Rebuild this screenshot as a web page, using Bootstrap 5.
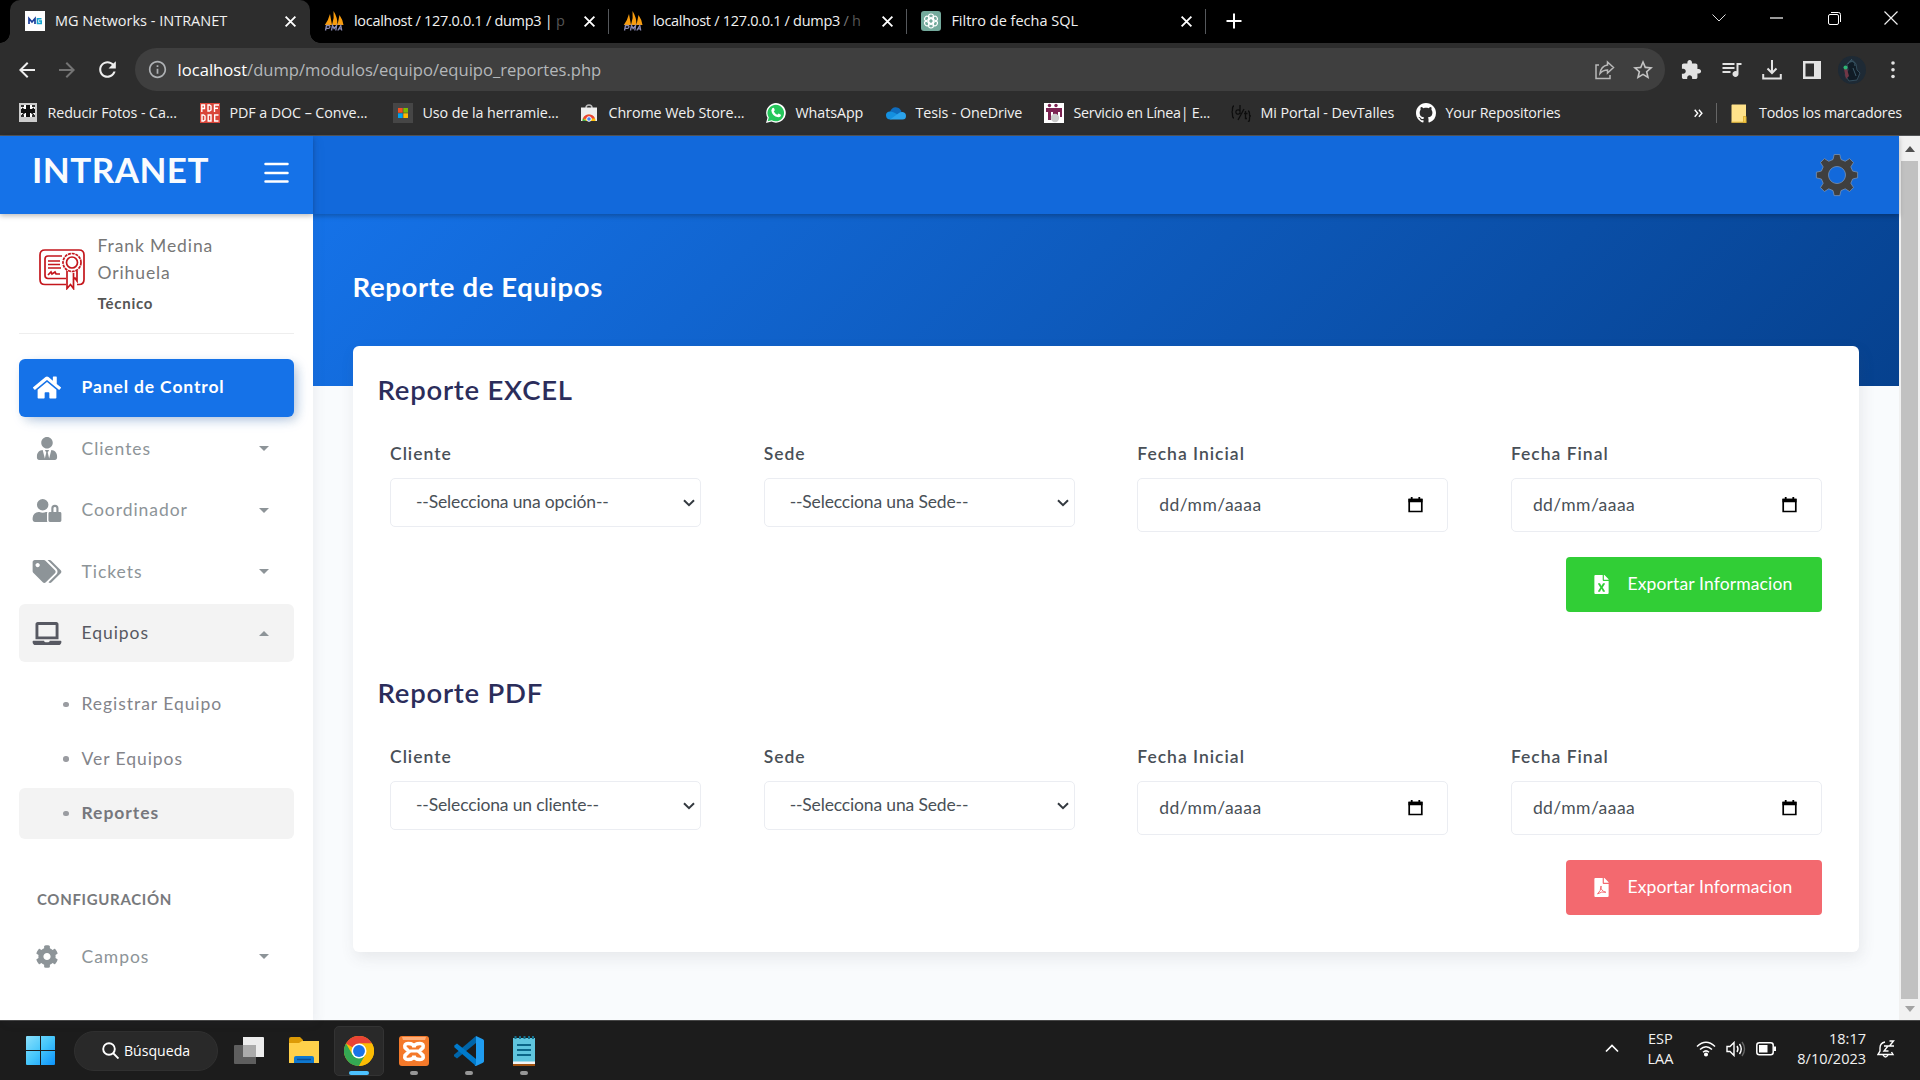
<!DOCTYPE html>
<html lang="es">
<head>
<meta charset="utf-8">
<title>MG Networks - INTRANET</title>
<link href="https://cdn.jsdelivr.net/npm/bootstrap@5.3.0/dist/css/bootstrap.min.css" rel="stylesheet">
<script src="https://cdn.jsdelivr.net/npm/bootstrap@5.3.0/dist/js/bootstrap.bundle.min.js"></script>
<style>
body{width:1920px;height:1080px;overflow:hidden;font-family:Lato,"Open Sans",sans-serif;font-size:17.5px;background:#f9fbfd}
svg{display:block;flex:none}
.sys{font-family:"Open Sans","Noto Sans",sans-serif;font-size:14.5px;color:#f1f1f1;white-space:nowrap}
.tabstrip{height:43px;background:#000;padding-left:10px}
.btab{width:298.7px;height:34px;padding:0 13px 0 14px;gap:10px;position:relative}
.btab .ttl{width:216px}
.btab.cut .ttl{letter-spacing:-.3px}
.btab .fade-1{color:#555}
.btab .fade-2{color:#777}
.btab.sep::after{content:"";position:absolute;right:0;top:9px;width:1px;height:25px;background:#55585c}
.btab.on{background:#2d2d2d;height:43px;padding-left:15px;padding-bottom:1px;border-radius:10px 10px 0 0;width:300px}
.btab.on::before,.btab.on::after{content:"";position:absolute;bottom:0;width:10px;height:10px}
.btab.on::before{left:-10px;background:radial-gradient(circle at 0 0,transparent 9.5px,#2d2d2d 10px)}
.btab.on::after{right:-10px;background:radial-gradient(circle at 100% 0,transparent 9.5px,#2d2d2d 10px)}
.newtab{margin:13px 0 0 20px}
.wbtn{width:57.3px;height:36px}
.toolrow{height:48px;background:#2d2d2d;padding:5px 0 0 7px}
.tbtn{width:40.2px;height:43px}
.omni{width:1530px;height:43px;border-radius:22px;background:#3f3f3f;margin-left:7px;margin-right:7px;padding-left:13px}
.omni .url{font-size:16.6px;color:#b4b7ba;margin-left:11px;padding-top:1px}
.marks{height:45px;background:#2d2d2d;border-bottom:1px solid #545658;padding-left:17.5px;font-size:14.3px;letter-spacing:-.08px}
.bm{gap:10px;flex:none}
.viewport{height:884px}
.side{width:313px;background:#fff;box-shadow:4px 4px 10px rgba(69,65,78,.06);z-index:2}
.brandbar{height:78px;background:#1572e8;padding:0 24px 0 32px}
.brandbar b{font-size:35px;line-height:42px;letter-spacing:.45px;color:#f9fbfd;margin-top:12px}
.brandbar svg{margin-top:26px}
.headshade{box-shadow:0 2px 5px rgba(0,0,0,.26)}
.topbar{height:78px;background:#1269db;position:relative;z-index:1;padding-right:40.5px}
.person{height:120px;margin:0 19px;border-bottom:1px solid #eee;padding:18px 0 0 20px;color:#777;letter-spacing:.9px;line-height:27px}
.person svg{margin:17px 12.500px 0 0}
.person small{font-size:15px;font-weight:700;color:#555;letter-spacing:.75px;line-height:35px;display:block}
.menu{padding:24.5px 19px 0;letter-spacing:.95px;color:#8d9498}
.mi{height:58px;border-radius:6px;padding:0 25px 0 11px;margin-bottom:3.4px;gap:17.5px}
.mi svg.ic{width:34px;height:23px}
.mi.main{background:#1572e8;color:#fff;font-weight:700;letter-spacing:.87px;box-shadow:4px 4px 10px 0 rgba(0,0,0,.1),4px 4px 15px -5px rgba(21,114,232,.4)}
.mi.main svg.ic{height:25px}
.mi.open{background:#f3f3f3;color:#575962}
.caret{width:0;height:0;border:5px solid transparent;border-top-color:#8d9498;border-bottom-width:0;margin-left:auto}
.caret.up{border-bottom:5px solid #8d9498;border-top:0}
.subs{padding-top:13.3px}
.sub{height:51px;border-radius:6px;padding-left:44px;gap:13px;color:#83848a;margin-bottom:3.6px}
.sub i{width:5.5px;height:5.5px;border-radius:50%;background:#9a9ca1}
.sub.on{background:#f3f3f3;font-weight:700;color:#76777d}
.conf{font-size:15px;font-weight:700;letter-spacing:.68px;color:#77797c;padding-left:18px;margin:46.5px 0 14.5px;line-height:28px}
.hero{height:172px;background:linear-gradient(-45deg,#06418e,#1572e8);padding:56px 0 0 39.5px}
.hero h2{font-size:27.5px;font-weight:700;letter-spacing:.66px;color:#fff;line-height:34px}
.panel{width:1506px;height:606px;margin:-40px 0 0 40px;background:#fff;border-radius:6px;box-shadow:2px 6px 15px rgba(69,65,78,.1);position:relative}
.rep{height:303px;padding:27px 37px 0 37px}
.rep h3{font-size:27.5px;font-weight:600;letter-spacing:.75px;color:#2b2d5b;line-height:34px;margin:0 0 34px -12.5px}
.flds{gap:62.5px}
.flds>div{flex:1 1 0}
.flds label{font-weight:600;letter-spacing:1px;color:#495057;line-height:26px;display:block;margin-bottom:11px}
.fin{font-size:17.5px;border:1px solid #ebedf2;border-radius:5px;color:#495057;background-color:#fff}
select.fin{height:49px;padding:0 40px 1px 25px;letter-spacing:-.15px;background-image:url("data:image/svg+xml,%3Csvg xmlns='http://www.w3.org/2000/svg' viewBox='0 0 12 8'%3E%3Cpath d='M1 1.2l5 5 5-5' fill='none' stroke='%23343a40' stroke-width='2'/%3E%3C/svg%3E");background-size:12px 8px;background-position:right 5px center}
div.fin{height:54px;padding:0 24px 0 21px;letter-spacing:.45px}
.exp{width:256px;height:55px;border-radius:4px;color:#fff;font-size:17.5px;letter-spacing:.13px;padding:0 0 0 27px;gap:18.5px;margin-top:25px}
.xls,.xls:hover{background:#31ce36}
.pdf,.pdf:hover{background:#f3696f}
.scroll{width:21px;background:#f1f1f1;padding:10px 2px 0 2px}
.scroll i{display:block;width:17px;height:838px;background:#c1c1c1;margin:9px 0 7px}
.task{height:60px;background:#1c1c1c;border-top:1px solid #474747;padding:0 25px 0 26px}
.pill{width:144px;height:40px;border-radius:20px;background:#292929;border:1px solid #303030;margin:0 6px 0 19px;font-size:14.1px;color:#fff;gap:5px;padding-left:27px}
.app{width:50px;height:50px;margin-right:5px;position:relative;border-radius:5px;border:1px solid transparent}
.app.on{background:#292929;border-color:#333}
.app.run::after,.app.on::after{content:"";position:absolute;bottom:0;left:20px;width:8px;height:4px;border-radius:2px;background:#969696}
.app.on::after{left:14px;width:20px;background:#4cc2ff}
.tray{line-height:20px}
</style>
</head>
<body class="d-flex flex-column">
<svg width="0" height="0" class="position-absolute">
<defs>
<symbol id="x" viewBox="0 0 12 12"><path d="M1.500 1.500l9 9M10.500 1.500l-9 9" stroke="#fff" stroke-width="1.700"/></symbol>
<symbol id="pma" viewBox="0 0 20 20"><path d="M.8 14Q4.500 9 6 3L8 14zM8 14Q10.500 7 9.500 0Q13.500 6 13.500 14zM13.500 14L15.500 4Q19 9 19.500 14z" fill="#f89c0e"/><path d="M1.500 19.500l1-5h2.200q1.400.1 1.200 1.500t-1.700 1.400H2.200M7.500 19.500l1-5 1.600 3 2.500-3-.8 5M13.800 19.500l3-5 .9 5M14.500 17.800h3" fill="none" stroke="#8b8bb5" stroke-width="1.300"/></symbol>
<symbol id="cog" viewBox="0 0 512 512"><path fill="currentColor" d="M487.400 315.700l-42.600-24.600c4.300-23.200 4.300-47 0-70.200l42.600-24.600c4.900-2.800 7.100-8.600 5.500-14-11.100-35.600-30-67.800-54.700-94.600-3.800-4.100-10-5.100-14.800-2.300L380.800 110c-17.900-15.400-38.500-27.300-60.800-35.100V25.800c0-5.600-3.900-10.500-9.400-11.700-36.700-8.200-74.300-7.800-109.200 0-5.500 1.200-9.400 6.100-9.400 11.700V75c-22.200 7.900-42.800 19.800-60.800 35.100L88.700 85.500c-4.900-2.800-11-1.900-14.800 2.300-24.700 26.700-43.600 58.900-54.700 94.600-1.700 5.400.6 11.200 5.500 14L67.300 221c-4.300 23.200-4.300 47 0 70.200l-42.600 24.600c-4.900 2.800-7.100 8.600-5.500 14 11.100 35.600 30 67.800 54.700 94.600 3.800 4.100 10 5.100 14.800 2.300l42.600-24.600c17.900 15.400 38.500 27.300 60.800 35.100v49.200c0 5.600 3.900 10.500 9.400 11.700 36.700 8.200 74.300 7.800 109.200 0 5.500-1.200 9.400-6.100 9.400-11.700v-49.200c22.200-7.900 42.800-19.800 60.800-35.100l42.600 24.600c4.900 2.800 11 1.900 14.800-2.300 24.700-26.700 43.600-58.900 54.700-94.600 1.500-5.500-.7-11.300-5.600-14.100zM256 336c-44.100 0-80-35.900-80-80s35.900-80 80-80 80 35.900 80 80-35.900 80-80 80z"/></symbol>
<symbol id="cal" viewBox="0 0 15 16"><path d="M1.200 2.500h12.600v12H1.200z" fill="none" stroke="#000" stroke-width="1.700"/><path d="M.5 1.800h14V5.200H.5zM2.800 0h1.800v3H2.800zM10.400 0h1.800v3h-1.800z"/></symbol>
<symbol id="chrome" viewBox="0 0 48 48"><circle cx="24" cy="24" r="24" fill="#fbbc04"/><path d="M24 24L3.200 12A24 24 0 0 1 44.800 12H24z" fill="#ea4335"/><path d="M3.200 12A24 24 0 0 0 24 48l10.400-18L24 24l-10.400 6z" fill="#34a853"/><path d="M24 48a24 24 0 0 0 20.800-36H24l10.400 18z" fill="#fbbc04"/><circle cx="24" cy="24" r="12" fill="#fff"/><circle cx="24" cy="24" r="9.500" fill="#1a73e8"/></symbol>
</defs>
</svg>

<!-- Browser chrome -->
<div class="tabstrip sys d-flex">
  <div class="btab on d-flex align-items-center"><svg width="20" height="20" viewBox="0 0 20 20"><path d="M0 0h20v20H0z" fill="#fff"/><path d="M4 13V7.500l3 3.500 3-3.500V13" fill="none" stroke="#1c3f9c" stroke-width="1.700"/><path d="M16.500 7.700h-4v4.800h3.700V10H14" fill="none" stroke="#17a4cf" stroke-width="1.600"/></svg><span class="ttl">MG Networks - INTRANET</span><svg class="ms-auto" width="13" height="13"><use href="#x"/></svg></div>
  <div class="btab cut sep d-flex align-items-center pt-2"><svg width="20" height="20"><use href="#pma"/></svg><span class="ttl">localhost / 127.0.0.1 / dump3 | <span class="fade-1">p</span></span><svg class="ms-auto" width="13" height="13"><use href="#x"/></svg></div>
  <div class="btab cut sep d-flex align-items-center pt-2"><svg width="20" height="20"><use href="#pma"/></svg><span class="ttl">localhost / 127.0.0.1 / dump3 <span class="fade-2">/</span> <span class="fade-1">h</span></span><svg class="ms-auto" width="13" height="13"><use href="#x"/></svg></div>
  <div class="btab sep d-flex align-items-center pt-2"><svg width="20" height="20" viewBox="0 0 20 20"><rect width="20" height="20" rx="3" fill="#74aa9c"/><g fill="none" stroke="#fff" stroke-width="1.100"><rect x="7.500" y="3" width="5" height="9.500" rx="2.500"/><rect x="7.500" y="3" width="5" height="9.500" rx="2.500" transform="rotate(60 10 10)"/><rect x="7.500" y="3" width="5" height="9.500" rx="2.500" transform="rotate(120 10 10)"/><rect x="7.500" y="3" width="5" height="9.500" rx="2.500" transform="rotate(180 10 10)"/><rect x="7.500" y="3" width="5" height="9.500" rx="2.500" transform="rotate(240 10 10)"/><rect x="7.500" y="3" width="5" height="9.500" rx="2.500" transform="rotate(300 10 10)"/></g></svg><span class="ttl">Filtro de fecha SQL</span><svg class="ms-auto" width="13" height="13"><use href="#x"/></svg></div>
  <svg class="newtab" width="16" height="16"><path d="M8 .5v15M.5 8h15" stroke="#fff" stroke-width="2"/></svg>
  <div class="ms-auto d-flex">
    <div class="wbtn d-flex align-items-center justify-content-center"><svg width="14" height="8"><path d="M.5.5L7 7 13.500.5" fill="none" stroke="#ddd"/></svg></div>
    <div class="wbtn d-flex align-items-center justify-content-center"><svg width="13" height="2"><path d="M0 1h13" stroke="#fff" stroke-width="1.200"/></svg></div>
    <div class="wbtn d-flex align-items-center justify-content-center"><svg width="13" height="13" fill="none" stroke="#fff"><rect x=".5" y="2.500" width="10" height="10" rx="1.500"/><path d="M3 .5h7.500a2 2 0 0 1 2 2V10"/></svg></div>
    <div class="wbtn d-flex align-items-center justify-content-center"><svg width="14" height="14"><path d="M.5.5l13 13M13.500.5l-13 13" stroke="#eee" stroke-width="1.200"/></svg></div>
  </div>
</div>
<div class="toolrow sys d-flex">
  <div class="tbtn d-flex align-items-center justify-content-center"><svg width="24" height="24" viewBox="0 0 24 24" fill="#eee"><path d="M20 11H7.830l5.590-5.590L12 4l-8 8 8 8 1.410-1.410L7.830 13H20v-2z"/></svg></div>
  <div class="tbtn d-flex align-items-center justify-content-center"><svg width="24" height="24" viewBox="0 0 24 24" fill="#747474"><path transform="matrix(-1 0 0 1 24 0)" d="M20 11H7.830l5.590-5.590L12 4l-8 8 8 8 1.410-1.410L7.830 13H20v-2z"/></svg></div>
  <div class="tbtn d-flex align-items-center justify-content-center"><svg width="25" height="25" viewBox="0 0 24 24" fill="#eee"><path d="M17.650 6.350C16.200 4.900 14.210 4 12 4c-4.420 0-7.990 3.580-7.990 8s3.570 8 7.990 8c3.730 0 6.840-2.550 7.730-6h-2.080c-.82 2.330-3.040 4-5.650 4-3.310 0-6-2.690-6-6s2.690-6 6-6c1.660 0 3.140.69 4.220 1.780L13 11h7V4l-2.350 2.350z"/></svg></div>
  <div class="omni d-flex align-items-center">
    <svg width="19" height="19" viewBox="1 1 22 22" fill="#aeb1b4"><path d="M11 7h2v2h-2zm0 4h2v6h-2zm1-9C6.480 2 2 6.480 2 12s4.480 10 10 10 10-4.480 10-10S17.520 2 12 2zm0 18c-4.410 0-8-3.590-8-8s3.590-8 8-8 8 3.590 8 8-3.590 8-8 8z"/></svg>
    <span class="url"><span class="text-white">localhost</span>/dump/modulos/equipo/equipo_reportes.php</span>
    <svg class="ms-auto" width="20" height="20" fill="none" stroke="#b9b9b9" stroke-width="1.500"><path d="M4 5H1v13.500h14V15"/><path d="M12.500 2l6 5.500-6 5.500V10Q8 10 5 13.500 6 6 12.500 5z"/></svg>
    <svg class="ms-3 me-2 pe-0" width="26" height="24" viewBox="0 0 26 24" fill="#c4c4c4"><path d="M22 9.240l-7.190-.62L12 2 9.190 8.630 2 9.240l5.460 4.730L5.820 21 12 17.270 18.180 21l-1.630-7.030L22 9.240zM12 15.400l-3.760 2.270 1-4.280-3.320-2.880 4.380-.38L12 6.100l1.710 4.040 4.380.38-3.320 2.880 1 4.280L12 15.400z"/></svg>
  </div>
  <div class="tbtn d-flex align-items-center justify-content-center"><svg width="21" height="21" viewBox="1 0 23 23" fill="#e2e2e2"><path d="M20.500 11H19V7c0-1.100-.9-2-2-2h-4V3.500C13 2.120 11.880 1 10.500 1S8 2.120 8 3.500V5H4c-1.100 0-1.990.9-1.990 2v3.800H3.500c1.490 0 2.700 1.210 2.700 2.700s-1.210 2.700-2.700 2.700H2V20c0 1.100.9 2 2 2h3.800v-1.500c0-1.490 1.210-2.700 2.700-2.700 1.490 0 2.700 1.210 2.700 2.700V22H17c1.100 0 2-.9 2-2v-4h1.500c1.380 0 2.500-1.120 2.500-2.500S21.880 11 20.500 11z"/></svg></div>
  <div class="tbtn d-flex align-items-center justify-content-center"><svg width="24" height="24" viewBox="0.500 1 24 24" fill="#e2e2e2"><path d="M15 6H3v2h12V6zm0 4H3v2h12v-2zM3 16h8v-2H3v2zM17 6v8.180c-.31-.11-.65-.18-1-.18-1.660 0-3 1.340-3 3s1.340 3 3 3 3-1.340 3-3V8h3V6h-5z"/></svg></div>
  <div class="tbtn d-flex align-items-center justify-content-center"><svg width="20" height="20" fill="none" stroke="#e2e2e2" stroke-width="2"><path d="M10 0v13M5.500 8.500L10 13l4.500-4.500M1.200 14v4.500h17.600V14"/></svg></div>
  <div class="tbtn d-flex align-items-center justify-content-center"><svg width="18" height="18"><path fill-rule="evenodd" d="M0 0h18v18H0zM2.500 2.500v13h8.500v-13z" fill="#e2e2e2"/></svg></div>
  <div class="tbtn d-flex align-items-center justify-content-center"><svg width="28" height="28" viewBox="0 0 28 28"><circle cx="14" cy="14" r="14" fill="#1e2a35"/><path d="M9 8q5-7 9 0l1 6 3 3-3 7-8 1-4-6 3-5z" fill="#101c26" stroke="#344d5c"/><path d="M12 6q5-2 5 4M15 12l3 8M14 3l-4 5" stroke="#3b5968" fill="none"/><path d="M6 13l2 10 3-3-2-7" fill="#703746"/><circle cx="7.500" cy="11.500" r="2" fill="#2eb775"/></svg></div>
  <div class="tbtn d-flex align-items-center justify-content-center"><svg width="4" height="18" fill="#e2e2e2"><circle cx="2" cy="2" r="1.800"/><circle cx="2" cy="8.800" r="1.800"/><circle cx="2" cy="15.500" r="1.800"/></svg></div>
</div>
<div class="marks sys d-flex align-items-center">
  <div class="bm d-flex align-items-center" style="width:182px"><svg width="20" height="20"><path d="M1 0h18v19H1z" fill="#ccc"/><path d="M3 2h14v12H3z" fill="#fff"/><path d="M8 2h4v12H8zM3 6h14v4H3z" fill="#111"/><path d="M3 2h3v2H3zM14 2h3v2h-3zM3 12h3v2H3zM14 12h3v2h-3z" fill="#333"/><path d="M4 5l2.500 2M16 5l-2.500 2M4 12l2.500-2M16 12l-2.500-2" stroke="#111" stroke-width="1.200"/></svg><span>Reducir Fotos - Ca...</span></div>
  <div class="bm d-flex align-items-center" style="width:193px"><svg width="20" height="20"><path d="M0 0h20v20H0z" fill="#d9463a"/><g fill="none" stroke="#fff" stroke-width="1.400"><path d="M1.800 9V2h2.700v3.500H2M8 2h1.500l1.500 1v4l-1.500 1H8zM14.500 9V2H19M14.500 5.200H18M2 12h1.500l1.500 1v4l-1.500 1H2zM8.200 12h2.800v6H8.200zM18.500 12h-3.800v6h3.800"/></g></svg><span>PDF a DOC – Conve...</span></div>
  <div class="bm d-flex align-items-center" style="width:186px"><svg width="20" height="20"><path d="M0 0h20v20H0z" fill="#464646"/><path d="M5 5h4.700v4.700H5z" fill="#f25022"/><path d="M10.300 5H15v4.700h-4.700z" fill="#7fba00"/><path d="M5 10.300h4.700V15H5z" fill="#00a4ef"/><path d="M10.300 10.300H15V15h-4.700z" fill="#ffb900"/></svg><span>Uso de la herramie...</span></div>
  <div class="bm d-flex align-items-center" style="width:187px"><svg width="20" height="20" viewBox="0 0 20 20"><path d="M7 5q0-3 3-3t3 3" fill="none" stroke="#bbb" stroke-width="1.500"/><path d="M2 4.500h16V18H2z" fill="#eee"/><path d="M3.500 18a6.500 6.500 0 0 1 13 0z" fill="#fbbc04"/><path d="M3.800 16A6.500 6.500 0 0 1 16 15.500H10z" fill="#ea4335"/><path d="M3.800 15.500L7.500 18h-4z" fill="#34a853"/><circle cx="10" cy="16" r="2.300" fill="#4285f4" stroke="#fff"/></svg><span>Chrome Web Store...</span></div>
  <div class="bm d-flex align-items-center" style="width:120px"><svg width="20" height="20" viewBox="0 0 20 20"><path d="M0 20l1.500-5.200A9.800 9.800 0 1 1 5.500 18.600z" fill="#fff"/><path d="M1.700 18.300l1.100-3.700A8.300 8.300 0 1 1 5.700 17.300z" fill="#25c65b"/><path d="M6.200 5.300q1.500-1.200 2 .3l.6 1.700-1 1.300q1.300 2.400 3.600 3.200l1.200-1.300 2.300 1.200q.3 2.300-2.600 2.600Q6 13 5.300 7.500z" fill="#fff"/></svg><span>WhatsApp</span></div>
  <div class="bm d-flex align-items-center" style="width:158px"><svg width="20" height="20" viewBox="0 0 20 20"><path d="M4 9q2-5.500 7-4.500 3.500.8 4.500 4.500l-3 6H4z" fill="#0f6cbd"/><path d="M4.500 16.500q-4.300-.2-4.500-4T4 8.500q3 0 5 1.500l5 3z" fill="#1490df"/><path d="M4 16.500L13 10q1.500-1.200 3.500-1 3.500.5 3.500 4t-3.500 3.500z" fill="#2ba3ec"/></svg><span>Tesis - OneDrive</span></div>
  <div class="bm d-flex align-items-center" style="width:187px"><svg width="20" height="20"><path d="M0 0h20v20H0z" fill="#fff"/><g fill="#7c2352"><circle cx="5.500" cy="2.500" r="1.700"/><circle cx="12" cy="2.500" r="1.700"/><path d="M2 5h16v9h-2V9h-2v8H9V9H7v8H4V9H2z"/></g><circle cx="11" cy="15" r="4.200" fill="#ccc"/></svg><span style="letter-spacing:-.25px">Servicio en Línea| E...</span></div>
  <div class="bm d-flex align-items-center" style="width:185px"><svg width="20" height="20" fill="none" stroke="#0d0d0d" stroke-width="1.300"><path d="M3 3Q1.500 3 1.500 6t-1 3q1 0 1 3T3 15M9 2v9M9 8a2.200 2.200 0 1 0 0 2M13 6L7 17M14.500 8v7.500h1.500M13 10.500h3.500M17 8q1.500 0 1.500 3t1 2q-1 0-1 3T17 18"/></svg><span>Mi Portal - DevTalles</span></div>
  <div class="bm d-flex align-items-center"><svg width="20" height="20" viewBox="0 0 16 16" fill="#fff"><path d="M8 0C3.580 0 0 3.580 0 8c0 3.540 2.290 6.530 5.470 7.590.4.070.55-.17.55-.38 0-.19-.01-.82-.01-1.490-2.010.37-2.530-.49-2.690-.94-.09-.23-.48-.94-.82-1.130-.28-.15-.68-.52-.01-.53.63-.01 1.080.58 1.230.82.72 1.210 1.870.87 2.330.66.07-.52.28-.87.51-1.070-1.780-.2-3.640-.89-3.640-3.950 0-.87.31-1.590.82-2.150-.08-.2-.36-1.020.08-2.120 0 0 .67-.21 2.200.82.64-.18 1.320-.27 2-.27s1.360.09 2 .27c1.530-1.040 2.200-.82 2.200-.82.44 1.100.16 1.920.08 2.120.51.56.82 1.270.82 2.150 0 3.070-1.870 3.750-3.650 3.950.29.25.54.73.54 1.480 0 1.070-.01 1.930-.01 2.200 0 .21.15.46.55.38A8.010 8.010 0 0 0 16 8c0-4.420-3.580-8-8-8"/></svg><span style="letter-spacing:-.15px">Your Repositories</span></div>
  <div class="ms-auto d-flex align-items-center" style="width:226px"><svg width="9" height="9" fill="none" stroke="#fff" stroke-width="1.400"><path d="M.7.7l3 3.500-3 3.500M4.900.7l3 3.500-3 3.500"/></svg><span style="width:1px;height:20px;background:#666;margin:0 14px 0 13px"></span><svg width="16" height="19"><path d="M1 .5h14v12h-2.500v6H.5V1z" fill="#ffe28a"/><path d="M12.500 12.500H15v6h-2.500zM.5 18.200h15" fill="#f5cf58" stroke="#e5b632"/></svg><span style="margin-left:12px;letter-spacing:-.2px">Todos los marcadores</span></div>
</div>

<!-- Web page -->
<div class="viewport d-flex">
  <aside class="side d-flex flex-column flex-shrink-0">
    <div class="brandbar headshade d-flex justify-content-between align-items-start"><b>INTRANET</b><svg width="25" height="22" stroke="#fff" stroke-width="2.500" stroke-linecap="round"><path d="M1.500 2h22M1.500 11h22M1.500 19.500h22"/></svg></div>
    <div class="person d-flex">
      <svg width="46" height="41" viewBox="0 0 46 41" fill="none" stroke="#c4161c" stroke-width="1.700"><path d="M27 35.500H6q-5 0-5-5V6q0-5 5-5h34q5 0 5 5v24.500q0 5-5 5h-2"/><path d="M27 29.500H9q-3 0-3-3V10q0-3 3-3h14M9 12h12M9 15.500h12M9 19h13M9 26l3-3 1 2 3-2 1 2h4"/><circle cx="33" cy="13.500" r="9" stroke-dasharray="3 .8"/><circle cx="33" cy="13.500" r="5.500"/><path d="M28 22v17.500l3.500-4 3 4V24M34 31l2-2 2 3V22"/></svg>
      <div>Frank Medina<br>Orihuela<small>Técnico</small></div>
    </div>
    <nav class="menu">
      <div class="mi main d-flex align-items-center"><svg class="ic" viewBox="0 0 576 512" fill="currentColor"><path d="M280.370 148.260L96 300.110V464a16 16 0 0 0 16 16l112.060-.29a16 16 0 0 0 15.920-16V368a16 16 0 0 1 16-16h64a16 16 0 0 1 16 16v95.640a16 16 0 0 0 16 16.050L464 480a16 16 0 0 0 16-16V300L295.670 148.260a12.190 12.190 0 0 0-15.300 0zM571.600 251.470L488 182.560V44.050a12 12 0 0 0-12-12h-56a12 12 0 0 0-12 12v72.610L318.470 43a48 48 0 0 0-61 0L4.340 251.470a12 12 0 0 0-1.600 16.900l25.500 31A12 12 0 0 0 45.150 301l235.220-193.740a12.190 12.190 0 0 1 15.300 0L530.900 301a12 12 0 0 0 16.900-1.600l25.500-31a12 12 0 0 0-1.700-16.930z"/></svg>Panel de Control</div>
      <div class="mi d-flex align-items-center"><svg class="ic" viewBox="0 0 448 512" fill="currentColor"><path d="M224 256c70.700 0 128-57.300 128-128S294.700 0 224 0 96 57.300 96 128s57.300 128 128 128zm95.800 32.600L272 480l-32-136 32-56h-96l32 56-32 136-47.800-191.400C56.900 292 0 350.300 0 422.400V464c0 26.500 21.500 48 48 48h352c26.500 0 48-21.500 48-48v-41.600c0-72.100-56.900-130.400-128.200-133.800z"/></svg>Clientes<span class="caret"></span></div>
      <div class="mi d-flex align-items-center"><svg class="ic" viewBox="0 0 640 512" fill="currentColor"><path d="M224 256A128 128 0 1 0 96 128a128 128 0 0 0 128 128zm96 64a63.080 63.080 0 0 1 8.100-30.500c-4.800-.5-9.500-1.500-14.500-1.500h-16.700a174.080 174.080 0 0 1-145.800 0h-16.700A134.430 134.430 0 0 0 0 422.400V464a48 48 0 0 0 48 48h280.900a63.540 63.540 0 0 1-8.900-32zm288-32h-32v-80a80 80 0 0 0-160 0v80h-32a32 32 0 0 0-32 32v160a32 32 0 0 0 32 32h224a32 32 0 0 0 32-32V320a32 32 0 0 0-32-32zm-80 0h-64v-80a32 32 0 0 1 64 0z"/></svg>Coordinador<span class="caret"></span></div>
      <div class="mi d-flex align-items-center"><svg class="ic" viewBox="0 0 640 512" fill="currentColor"><path d="M497.941 225.941L286.059 14.059A48 48 0 0 0 252.118 0H48C21.490 0 0 21.490 0 48v204.118a48 48 0 0 0 14.059 33.941l211.882 211.882c18.744 18.745 49.136 18.746 67.882 0l204.118-204.118c18.745-18.745 18.745-49.137 0-67.882zM112 160c-26.510 0-48-21.490-48-48s21.490-48 48-48 48 21.490 48 48-21.490 48-48 48zm513.941 133.823L421.823 497.941c-18.745 18.745-49.137 18.745-67.882 0l-.36-.36L527.640 323.522c16.999-16.999 26.360-39.600 26.360-63.640s-9.362-46.641-26.360-63.640L331.397 0h48.721a48 48 0 0 1 33.941 14.059l211.882 211.882c18.745 18.745 18.745 49.137 0 67.882z"/></svg>Tickets<span class="caret"></span></div>
      <div class="mi open d-flex align-items-center"><svg class="ic" viewBox="0 0 640 512" fill="currentColor"><path d="M624 416H381.540c-.74 19.810-14.710 32-32.740 32H288c-18.690 0-33.020-17.470-32.770-32H16c-8.800 0-16 7.200-16 16v16c0 35.200 28.800 64 64 64h512c35.200 0 64-28.800 64-64v-16c0-8.800-7.200-16-16-16zM576 48c0-26.400-21.600-48-48-48H112C85.600 0 64 21.600 64 48v336h512V48zm-64 272H128V64h384v256z"/></svg>Equipos<span class="caret up"></span></div>
      <div class="subs">
        <div class="sub d-flex align-items-center"><i></i>Registrar Equipo</div>
        <div class="sub d-flex align-items-center"><i></i>Ver Equipos</div>
        <div class="sub on d-flex align-items-center"><i></i>Reportes</div>
      </div>
      <div class="conf">CONFIGURACIÓN</div>
      <div class="mi d-flex align-items-center"><svg class="ic"><use href="#cog"/></svg>Campos<span class="caret"></span></div>
    </nav>
  </aside>
  <main class="flex-grow-1">
    <div class="topbar headshade d-flex justify-content-end align-items-center"><svg width="44" height="44" viewBox="-22 -22 44 44"><path fill="#3f3f3f" stroke="#8499b8" stroke-width=".7" stroke-linejoin="round" fill-rule="evenodd" d="M-4-15.500l1.200-5h5.600l1.200 5 4.200 1.800 4.400-2.700 3.900 3.900-2.700 4.400 1.800 4.200 5 1.100v5.600l-5 1.200-1.800 4.200 2.700 4.400-3.900 3.900-4.400-2.700-4.200 1.800-1.200 5h-5.600l-1.200-5-4.200-1.800-4.400 2.700-3.900-3.900 2.700-4.400-1.800-4.200-5-1.200v-5.600l5-1.100 1.800-4.200-2.700-4.400 3.900-3.900 4.400 2.700zM0-8.500a8.500 8.500 0 1 0 .01 0z"/></svg></div>
    <div class="hero"><h2>Reporte de Equipos</h2></div>
    <div class="panel">
      <section class="rep">
        <h3>Reporte EXCEL</h3>
        <div class="flds d-flex">
          <div><label>Cliente</label><select class="form-select fin"><option>--Selecciona una opción--</option></select></div>
          <div><label>Sede</label><select class="form-select fin"><option>--Selecciona una Sede--</option></select></div>
          <div><label>Fecha Inicial</label><div class="fin d-flex align-items-center justify-content-between">dd/mm/aaaa<svg width="15" height="16"><use href="#cal"/></svg></div></div>
          <div><label>Fecha Final</label><div class="fin d-flex align-items-center justify-content-between">dd/mm/aaaa<svg width="15" height="16"><use href="#cal"/></svg></div></div>
        </div>
        <div class="d-flex justify-content-end"><button class="btn exp xls d-flex align-items-center"><svg width="15" height="19" viewBox="0 0 384 512" fill="#fff"><path d="M224 136V0H24C10.700 0 0 10.700 0 24v464c0 13.300 10.700 24 24 24h336c13.300 0 24-10.700 24-24V160H248c-13.200 0-24-10.800-24-24zm60.100 106.500L224 336l60.100 93.500c5.100 8-.6 18.500-10.100 18.500h-34.900c-4.400 0-8.500-2.400-10.600-6.300C208.900 405.500 192 373 192 373c-6.400 14.800-10 20-36.600 68.800-2.100 3.900-6.100 6.300-10.500 6.300H110c-9.500 0-15.200-10.500-10.100-18.500l60.300-93.500-60.300-93.500c-5.200-8 .6-18.500 10.100-18.500h34.800c4.400 0 8.500 2.400 10.600 6.300 26.100 48.800 20 33.600 36.600 68.500 0 0 6.100-11.700 36.600-68.500 2.100-3.900 6.200-6.300 10.600-6.300H274c9.500-.1 15.200 10.400 10.100 18.400zM384 121.900v6.100H256V0h6.100c6.400 0 12.500 2.500 17 7l97.900 98c4.500 4.500 7 10.600 7 16.900z"/></svg>Exportar Informacion</button></div>
      </section>
      <section class="rep">
        <h3>Reporte PDF</h3>
        <div class="flds d-flex">
          <div><label>Cliente</label><select class="form-select fin"><option>--Selecciona un cliente--</option></select></div>
          <div><label>Sede</label><select class="form-select fin"><option>--Selecciona una Sede--</option></select></div>
          <div><label>Fecha Inicial</label><div class="fin d-flex align-items-center justify-content-between">dd/mm/aaaa<svg width="15" height="16"><use href="#cal"/></svg></div></div>
          <div><label>Fecha Final</label><div class="fin d-flex align-items-center justify-content-between">dd/mm/aaaa<svg width="15" height="16"><use href="#cal"/></svg></div></div>
        </div>
        <div class="d-flex justify-content-end"><button class="btn exp pdf d-flex align-items-center"><svg width="15" height="19" viewBox="0 0 384 512"><path fill="#fff" d="M224 136V0H24C10.700 0 0 10.700 0 24v464c0 13.300 10.700 24 24 24h336c13.300 0 24-10.700 24-24V160H248c-13.200 0-24-10.800-24-24zM384 121.900v6.100H256V0h6.100c6.400 0 12.500 2.500 17 7l97.900 98c4.500 4.500 7 10.600 7 16.900z"/><path d="M85 430Q180 350 180 215q-20 130 130 170-110-35-225 45" fill="none" stroke="#f3696f" stroke-width="26"/></svg>Exportar Informacion</button></div>
      </section>
    </div>
  </main>
  <div class="scroll flex-shrink-0 d-flex flex-column align-items-center"><svg width="10" height="6"><path d="M5 0l5 6H0z" fill="#505050"/></svg><i></i><svg width="10" height="6"><path d="M5 6l5-6H0z" fill="#a3a3a3"/></svg></div>
</div>

<!-- Taskbar -->
<div class="task sys d-flex align-items-center">
  <svg width="29" height="29"><defs><linearGradient id="w2" gradientUnits="userSpaceOnUse" x1="0" y1="0" x2="29" y2="29"><stop stop-color="#8be0fb"/><stop offset=".5" stop-color="#45c6fb"/><stop offset="1" stop-color="#0c93fc"/></linearGradient></defs><path fill="url(#w2)" d="M0 1q0-1 1-1h13v14H0zM15 0h13q1 0 1 1v13H15zM0 15h14v14H1q-1 0-1-1zM15 15h14v13q0 1-1 1H15z"/></svg>
  <div class="pill d-flex align-items-center"><svg width="17" height="17" fill="none" stroke="#fff" stroke-width="1.900"><circle cx="7" cy="7" r="5.800"/><path d="M11 11l5.500 5.500"/></svg>Búsqueda</div>
  <div class="app d-flex align-items-center justify-content-center"><svg width="30" height="28"><path d="M9 0h20q1 0 1 1v19H9z" fill="#ededed"/><path d="M0 9q0-1 1-1h21v19H1q-1 0-1-1z" fill="#5e5e5e"/><path d="M9 8h13v12H9z" fill="#ababab"/></svg></div>
  <div class="app d-flex align-items-center justify-content-center"><svg width="30" height="27"><path d="M0 2q0-2 2-2h9l3 3v4H0z" fill="#dc9a06"/><path d="M0 6h10l3-2h17v22H0z" fill="#ffd04a"/><path d="M5 26v-5q0-2 2-2h16q2 0 2 2v5z" fill="#0f78d0"/><path d="M8 22.500h14" stroke="#0a4c92" stroke-width="1.500"/></svg></div>
  <div class="app on d-flex align-items-center justify-content-center"><svg width="30" height="30"><use href="#chrome"/></svg></div>
  <div class="app run d-flex align-items-center justify-content-center"><svg width="30" height="30" viewBox="0 0 30 30"><rect width="30" height="30" rx="3" fill="#f4792a"/><path d="M3 1h24l-1 3H4z" fill="#ffae78"/><path d="M9 7.500q6 0 6 4 0-4 6-4 4 0 3 4l-4 4 4 4q1 4-3 4-6 0-6-4 0 4-6 4-4 0-3-4l4-4-4-4q-1-4 3-4z" fill="none" stroke="#fff" stroke-width="3.600"/><path d="M11 15h8" stroke="#fff" stroke-width="3"/></svg></div>
  <div class="app run d-flex align-items-center justify-content-center"><svg width="30" height="30" viewBox="0 0 30 30"><path d="M22 0v7L3 22.500l-3-2.200v-1.600z" fill="#0065a9"/><path d="M22 30v-7L3 7.500.3 9.500v1.800z" fill="#007acc"/><path d="M22 0l7 3.200q1 .6 1 1.500v20.600q0 .9-1 1.500L22 30q-1 0-1.500-.8.800.3 1.500-.7z" fill="#1f9cf0"/></svg></div>
  <div class="app run d-flex align-items-center justify-content-center"><svg width="22" height="30"><path d="M0 2h22v26H0z" fill="#5fc5de"/><path d="M2.500 0v3M7 0v3M11.500 0v3M16 0v3M20 0v3" stroke="#13708d" stroke-width="2"/><path d="M4 9h14M4 14h14M4 19h14" stroke="#0b6688" stroke-width="1.800"/><path d="M0 25.500h22V28H0z" fill="#f4f4f4"/><path d="M0 28h22v2H0z" fill="#a2520f"/></svg></div>
  <div class="tray ms-auto pb-1 d-flex align-items-center">
    <svg width="14" height="9" fill="none" stroke="#fff" stroke-width="1.700"><path d="M1 7.500l6-6 6 6"/></svg>
    <div class="text-center" style="margin:0 23px 0 28px">ESP<br>LAA</div>
    <svg width="20" height="16" viewBox="0 0 20 16" fill="none" stroke="#fff" stroke-width="1.500"><path d="M1 5.500q9-8.500 18 0M4 8.500q6-5.500 12 0M7 11.200q3-2.600 6 0"/><circle cx="10" cy="13.500" r="1.300" fill="#fff"/></svg>
    <svg style="margin:0 10px" width="20" height="16" fill="none" stroke="#fff" stroke-width="1.400"><path d="M1 5.500h3L8 1.500v13L4 10.500H1z"/><path d="M11 5q2 3 0 6M13.500 3q3.500 5 0 10"/><path d="M16 1q5 7 0 14" stroke="#666"/></svg>
    <svg width="20" height="14"><rect x=".8" y=".8" width="16.400" height="12" rx="2.500" fill="none" stroke="#fff" stroke-width="1.500"/><path d="M3 3h8.500v7.500H3zM18 4.500h2v4.500h-2z" fill="#fff"/></svg>
    <div class="text-end" style="margin:0 11px 0 21px">18:17<br>8/10/2023</div>
    <svg width="18" height="18" fill="none" stroke="#fff" stroke-width="1.400"><path d="M8 2Q3 3 3 8v3l-2 3.500h15L14.500 12M6 15q2.500 4 5 0M7 6h4l-4 5h4.500M12.500 1h4l-4 5H17"/></svg>
  </div>
</div>
</body>
</html>
